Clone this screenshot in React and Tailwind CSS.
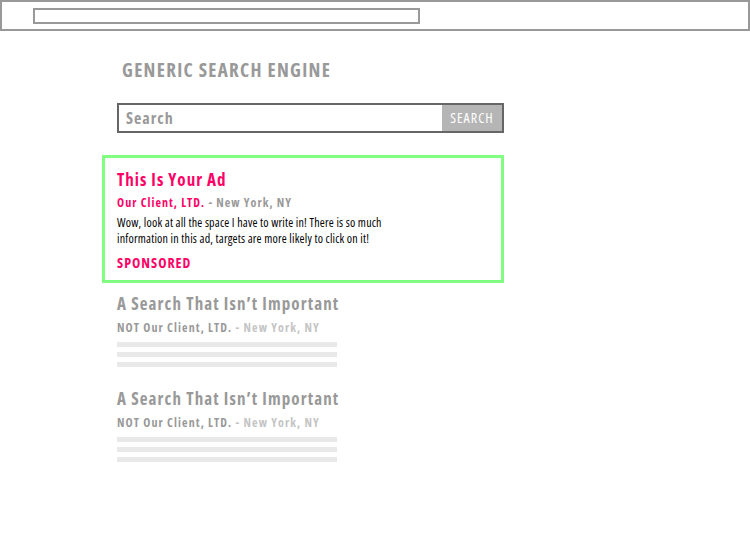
const Lines = () => (
    <div className="mt-[6px] flex flex-col gap-[5px]">
        <div className="h-[5px] w-[220px] bg-[#e9e9e9]" />
        <div className="h-[5px] w-[220px] bg-[#e9e9e9]" />
        <div className="h-[5px] w-[220px] bg-[#e9e9e9]" />
    </div>
);

const Result = () => (
    <div className="ml-[117px]">
        <h2 className="text-[17px] leading-[22px] font-bold tracking-[1.1px] text-[#999]">A Search That Isn’t Important</h2>
        <p className="mt-[5px] text-[12px] leading-[16px] font-bold tracking-[1.1px] text-[#999]">
            NOT Our Client, LTD. <span className="text-[#c4c4c4]">- New York, NY</span>
        </p>
        <Lines />
    </div>
);

export default function App() {
    return (
        <div className="w-[750px] h-[550px] bg-white font-['Open_Sans',sans-serif] font-stretch-condensed">
            <div className="h-[31px] border-2 border-[#999] pt-[6px] pl-[31px]">
                <div className="h-[16px] w-[387px] border-2 border-[#999]" />
            </div>

            <h1 className="ml-[122px] mt-[27px] text-[19px] leading-[24px] font-bold tracking-[1.3px] text-[#999]">
                GENERIC SEARCH ENGINE
            </h1>

            <div className="ml-[117px] mt-[21px] flex h-[30px] w-[387px] border-2 border-[#666]">
                <div className="flex-1 pl-[7px] text-[16px] leading-[26px] font-bold tracking-[1px] text-[#999]">Search</div>
                <div className="w-[60px] bg-[#b5b5b5] text-center text-[14px] leading-[26px] tracking-[1px] text-white">SEARCH</div>
            </div>

            <div className="ml-[102px] mt-[22px] w-[402px] h-[128px] border-[3px] border-[#80ff80] px-[12px] pt-[11px]">
                <h2 className="text-[17px] leading-[22px] font-bold tracking-[1px] text-[#ff0066]">This Is Your Ad</h2>
                <p className="mt-[4px] text-[12px] leading-[16px] font-bold tracking-[1.05px] text-[#ff0066]">
                    Our Client, LTD. <span className="text-[#999]">- New York, NY</span>
                </p>
                <p className="mt-[4px] w-[285px] text-[12px] leading-[16px] font-medium tracking-[0.2px] text-black">
                    Wow, look at all the space I have to write in! There is so much information in this ad, targets are more likely to click on it!
                </p>
                <p className="mt-[7px] text-[14px] leading-[18px] font-bold tracking-[1px] text-[#ff0066]">SPONSORED</p>
            </div>

            <div className="mt-[10px]">
                <Result />
            </div>
            <div className="mt-[21px]">
                <Result />
            </div>
        </div>
    );
}
